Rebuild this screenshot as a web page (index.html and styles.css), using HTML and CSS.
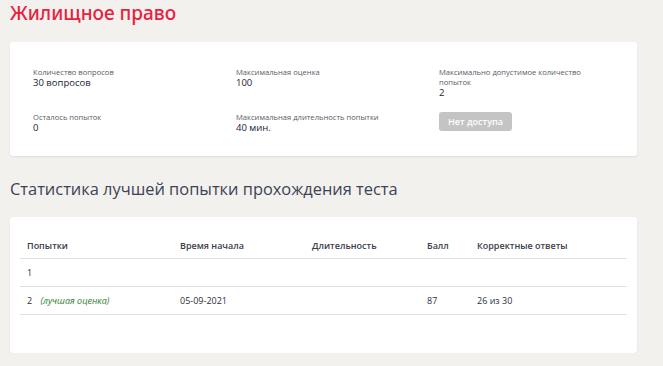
FILE: index.html
```html
<!DOCTYPE html>
<html lang="ru">
<head>
  <meta charset="UTF-8">
  <meta name="viewport" content="width=device-width, initial-scale=1.0">
  <title>Жилищное право</title>
  <link rel="stylesheet" href="styles.css">
</head>
<body>
  <div class="page">
    <h1 class="title">Жилищное право</h1>

    <div class="card info-card">
      <div class="info-grid">
        <div class="info-item">
          <div class="info-label">Количество вопросов</div>
          <div class="info-value">30 вопросов</div>
        </div>
        <div class="info-item">
          <div class="info-label">Максимальная оценка</div>
          <div class="info-value">100</div>
        </div>
        <div class="info-item">
          <div class="info-label">Максимально допустимое количество попыток</div>
          <div class="info-value">2</div>
        </div>
        <div class="info-item">
          <div class="info-label">Осталось попыток</div>
          <div class="info-value">0</div>
        </div>
        <div class="info-item">
          <div class="info-label">Максимальная длительность попытки</div>
          <div class="info-value">40 мин.</div>
        </div>
        <div class="info-item">
          <a href="#" class="no-access-btn">Нет доступа</a>
        </div>
      </div>
    </div>

    <h2 class="section-title">Статистика лучшей попытки прохождения теста</h2>

    <div class="card stats-card">
      <table class="stats-table">
        <thead>
          <tr>
            <th class="col-try">Попытки</th>
            <th class="col-start">Время начала</th>
            <th class="col-dur">Длительность</th>
            <th class="col-score">Балл</th>
            <th>Корректные ответы</th>
          </tr>
        </thead>
        <tbody>
          <tr>
            <td>1</td>
            <td></td>
            <td></td>
            <td></td>
            <td></td>
          </tr>
          <tr>
            <td>2 <span class="best">(лучшая оценка)</span></td>
            <td>05-09-2021</td>
            <td></td>
            <td>87</td>
            <td>26 из 30</td>
          </tr>
        </tbody>
      </table>
    </div>
  </div>
</body>
</html>
```

FILE: styles.css
```css
body {
  margin: 0;
  background-color: #f2f1ee;
  font-family: "Open Sans", "Noto Sans", Arial, sans-serif;
  color: #2b2f3a;
}
.page {
  width: 627px;
  padding: 0 10px;
}
.title {
  margin: 0;
  padding-top: 1px;
  font-size: 19px;
  line-height: 24px;
  font-weight: 500;
  color: #e8213f;
  font-family: "Noto Sans", "Open Sans", sans-serif;
}
.card {
  background-color: #fff;
  border-radius: 3px;
  box-shadow: 0 1px 2px rgba(0, 0, 0, 0.08);
}
.info-card {
  margin-top: 17px;
  padding: 25px 0 23px 23px;
}
.info-grid {
  display: grid;
  grid-template-columns: repeat(3, 203px);
  row-gap: 14px;
  align-items: start;
}
.info-item {
  padding-right: 40px;
}
.info-label {
  font-size: 7.6px;
  line-height: 10px;
  color: #5a5a66;
}
.info-value {
  font-size: 9.5px;
  line-height: 11px;
  font-weight: 400;
  color: #1a2236;
}
.no-access-btn {
  display: block;
  width: 73px;
  height: 19px;
  line-height: 19px;
  text-align: center;
  background-color: #c4c4c4;
  color: #fff;
  font-size: 9px;
  font-weight: 600;
  text-decoration: none;
  border-radius: 3px;
}
.section-title {
  margin: 23px 0 0;
  font-size: 16.4px;
  line-height: 20px;
  font-weight: 400;
  color: #3d4353;
}
.stats-card {
  margin-top: 18px;
  padding: 15px 10px 38px;
}
.stats-table {
  width: 100%;
  border-collapse: collapse;
  font-size: 9px;
}
.stats-table th, .stats-table td {
  padding: 0 7px;
  text-align: left;
  border-bottom: 1px solid #e2e1de;
}
.stats-table th {
  height: 26px;
  font-weight: 600;
  color: #3a3e4a;
}
.stats-table td {
  height: 27px;
  color: #2b2f3a;
}
.col-try { width: 139px; }
.col-start { width: 118px; }
.col-dur { width: 101px; }
.col-score { width: 36px; }
.best {
  margin-left: 6px;
  font-style: italic;
  color: #2e7d32;
}
```
